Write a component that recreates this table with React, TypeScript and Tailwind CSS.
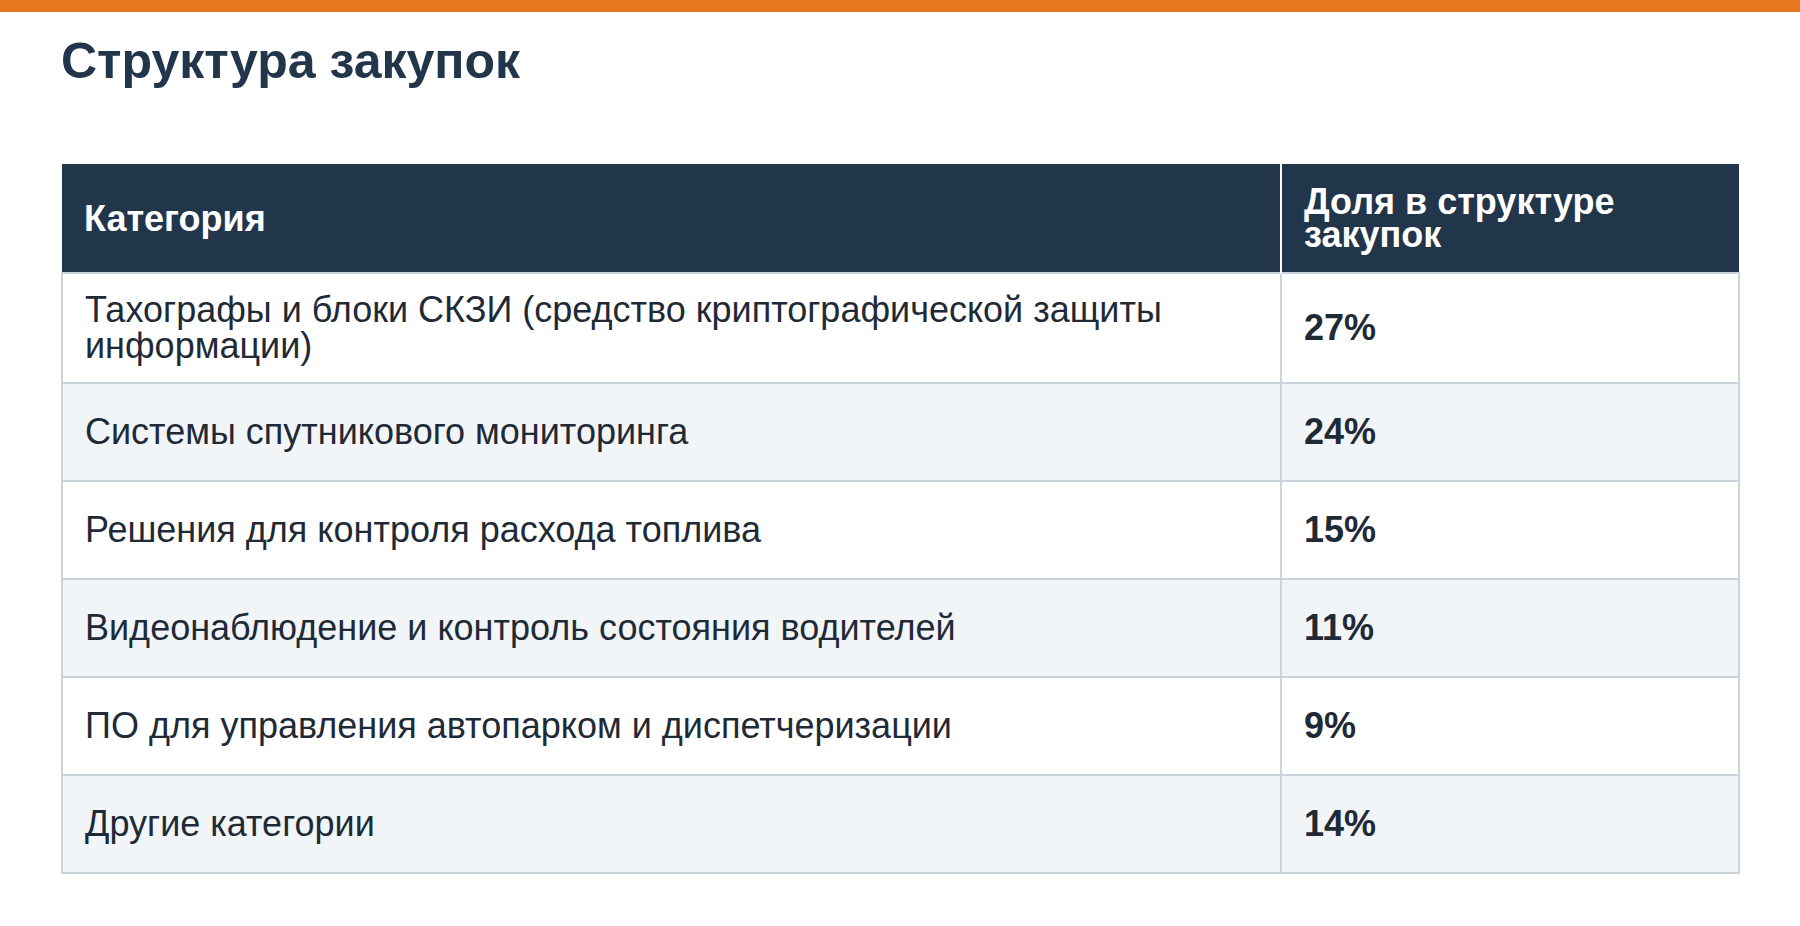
const rows = [
  { name: "Тахографы и блоки СКЗИ (средство криптографической защиты информации)", share: "27%" },
  { name: "Системы спутникового мониторинга", share: "24%" },
  { name: "Решения для контроля расхода топлива", share: "15%" },
  { name: "Видеонаблюдение и контроль состояния водителей", share: "11%" },
  { name: "ПО для управления автопарком и диспетчеризации", share: "9%" },
  { name: "Другие категории", share: "14%" },
]

export default function App() {
  return (
    <div className="min-h-screen bg-white font-['Liberation_Sans',Arial,sans-serif]">
      <div className="h-3 bg-[#e87722]" />
      <div className="pl-[61px] pr-[60px]">
        <h1 className="mt-6 text-[50px] font-bold leading-none text-[#22364b]">Структура закупок</h1>

        <table className="mt-[78px] w-full border-collapse text-left">
          <thead>
            <tr className="bg-[#22364b] text-white">
              <th className="w-[1219px] border-r-2 border-white px-[22px] py-[21px] text-[36px] font-bold leading-[33px]">
                Категория
              </th>
              <th className="px-[22px] py-[21px] text-[36px] font-bold leading-[33px]">Доля в структуре закупок</th>
            </tr>
          </thead>
          <tbody>
            {rows.map((row, i) => (
              <tr key={i} className={i % 2 === 1 ? "bg-[#f1f5f8]" : "bg-white"}>
                <td className="h-[98px] border-2 border-[#cbd4dc] px-[22px] py-[18px] align-middle text-[36px] leading-[36px] text-[#1f2a37]">
                  {row.name}
                </td>
                <td className="h-[98px] border-2 border-[#cbd4dc] px-[22px] py-[18px] align-middle text-[36px] font-bold leading-[36px] text-[#1f2a37]">
                  {row.share}
                </td>
              </tr>
            ))}
          </tbody>
        </table>
      </div>
    </div>
  )
}
